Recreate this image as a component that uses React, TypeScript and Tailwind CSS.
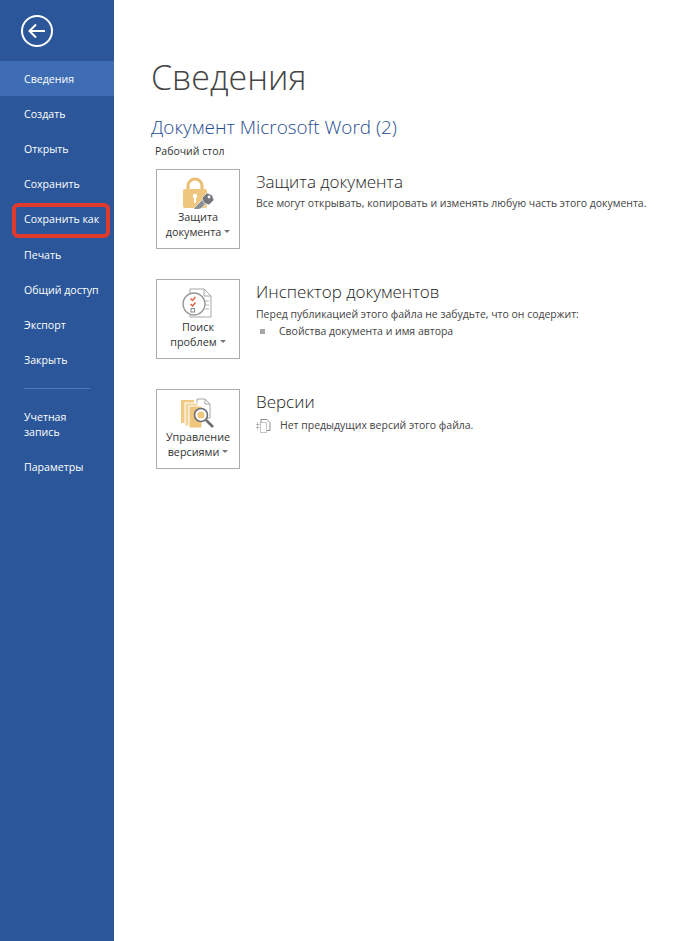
const font = "font-['Open_Sans','Noto_Sans',sans-serif]"

const menuTop = ['Создать', 'Открыть', 'Сохранить', 'Сохранить как', 'Печать', 'Общий доступ', 'Экспорт', 'Закрыть']

function MenuItem({ label, active, outlined }: { label: string; active?: boolean; outlined?: boolean }) {
  return (
    <div className={`relative h-[35.2px] flex items-center pl-6 pt-[2px] text-[10.6px] text-white ${active ? 'bg-[#3e6db4]' : ''}`}>
      {label}
      {outlined && <span className="absolute left-3 right-1 top-[1px] bottom-[-1px] rounded-[6px] border-[4px] border-[#df3a2c]" />}
    </div>
  )
}

function LockIcon() {
  return (
    <svg width="36" height="32" viewBox="0 0 36 32">
      <path d="M8 13V9a7 7 0 0 1 14 0v4" fill="none" stroke="#e9bf74" strokeWidth="3" />
      <rect x="3" y="12" width="24" height="19" rx="2" fill="#efc67e" />
      <circle cx="15" cy="19" r="2.2" fill="#fff" />
      <rect x="14" y="20" width="2" height="6" fill="#fff" />
      <path d="M14 31l9-9 2 2-1 2 2 0 0 2-2 0-1 2-3 2-6 1z" fill="#8b8f94" stroke="#fff" strokeWidth="0.6" />
      <path d="M22 21l5-5 5 2 2 5-5 5-5-2z" fill="#73777c" stroke="#fff" strokeWidth="0.6" />
      <circle cx="29" cy="20" r="1.4" fill="#fff" />
    </svg>
  )
}

function InspectIcon() {
  return (
    <svg width="36" height="32" viewBox="0 0 36 32" fill="none">
      <path d="M10 2h14l7 7v21H10z" fill="#fff" stroke="#a6a6a6" />
      <path d="M24 2v7h7" stroke="#a6a6a6" />
      <path d="M25 14h4M25 18h4M25 22h4" stroke="#b8b8b8" />
      <circle cx="14" cy="17" r="11" fill="#fff" stroke="#9a9a9a" strokeWidth="1.4" />
      <path d="M10.5 11.5l2 2 3-3.5M10.5 17l2 2 3-3.5" stroke="#e0603a" strokeWidth="1.4" />
      <rect x="11" y="21.5" width="3.5" height="3.5" stroke="#8a8a8a" />
    </svg>
  )
}

function VersionsIcon() {
  return (
    <svg width="36" height="32" viewBox="0 0 36 32" fill="none">
      <path d="M17 2h8l5 5v14H17z" fill="#fff" stroke="#a6a6a6" />
      <path d="M25 2v5h5" stroke="#a6a6a6" />
      <rect x="1" y="3" width="13" height="23" fill="#f0ca85" />
      <rect x="5" y="6" width="13" height="23" fill="#f3d498" stroke="#fff" />
      <rect x="9" y="9" width="13" height="22" fill="#efc67e" stroke="#fff" />
      <circle cx="21" cy="18" r="6.5" fill="#fff" stroke="#6a6e73" strokeWidth="1.6" />
      <circle cx="21" cy="18" r="3.5" fill="#efc67e" />
      <path d="M26 23l7 7" stroke="#6a6e73" strokeWidth="2.6" />
    </svg>
  )
}

function Section({ icon, lines, title, children, className }: {
  icon: React.ReactNode
  lines: string[]
  title: string
  children: React.ReactNode
  className?: string
}) {
  return (
    <div className={`flex ${className ?? ''}`}>
      <div className="w-[84px] h-[80px] border border-[#ababab] flex flex-col items-center pt-[7px] text-[10.8px] leading-[15px] text-[#333]">
        <div className="h-[32px] flex items-center">{icon}</div>
        <div className="text-center">{lines[0]}</div>
        <div className="flex items-center whitespace-nowrap text-center">
          {lines[1]}
          <span className="ml-[3px] border-x-[3px] border-x-transparent border-t-[3px] border-t-[#777]" />
        </div>
      </div>
      <div className="ml-[16px] flex-1">
        <h3 className="text-[17px] leading-[22px] mt-[2px] font-light text-[#222]">{title}</h3>
        {children}
      </div>
    </div>
  )
}

export default function App() {
  return (
    <div className={`${font} flex min-h-[941px] bg-white`}>
      <aside className="w-[114px] shrink-0 bg-[#2b579a]">
        <div className="h-[61px] pl-[21px] pt-[15px]">
          <svg width="32" height="32" viewBox="0 0 32 32" fill="none" stroke="#fff">
            <circle cx="16" cy="16" r="15" strokeWidth="2" />
            <path d="M24 16H9M15 9.5L8.5 16l6.5 6.5" strokeWidth="2" />
          </svg>
        </div>
        <MenuItem label="Сведения" active />
        {menuTop.map(label => (
          <MenuItem key={label} label={label} outlined={label === 'Сохранить как'} />
        ))}
        <div className="ml-6 mt-[10px] mb-[20px] w-[66px] h-px bg-[#4f78b5]" />
        <div className="pl-6 pt-[1px] text-[10.6px] leading-[15px] text-white">
          <div>Учетная</div>
          <div>запись</div>
        </div>
        <div className="pl-6 mt-[20px] text-[10.6px] leading-[15px] text-white">Параметры</div>
      </aside>
      <main className="flex-1 pl-[37px] pt-[52px]">
        <h1 className="text-[34px] leading-[50px] font-light text-[#444]">Сведения</h1>
        <h2 className="mt-[12px] text-[18.9px] leading-[26px] font-light text-[#1f4c90]">Документ Microsoft Word (2)</h2>
        <p className="mt-[4px] ml-[4px] text-[10.5px] leading-[15px] text-[#333]">Рабочий стол</p>
        <div className="ml-[5px] mt-[10px]">
          <Section icon={<LockIcon />} lines={['Защита', 'документа']} title="Защита документа">
            <p className="mt-[3px] text-[10.48px] leading-[15px] text-[#444]">Все могут открывать, копировать и изменять любую часть этого документа.</p>
          </Section>
          <Section className="mt-[30px]" icon={<InspectIcon />} lines={['Поиск', 'проблем']} title="Инспектор документов">
            <p className="mt-[4px] text-[10.48px] leading-[15px] text-[#444]">Перед публикацией этого файла не забудьте, что он содержит:</p>
            <div className="flex items-center mt-[2px] text-[10.48px] leading-[15px] text-[#444]">
              <span className="ml-[4px] mr-[14px] w-[5px] h-[5px] bg-[#a6a6a6]" />
              Свойства документа и имя автора
            </div>
          </Section>
          <Section className="mt-[30px]" icon={<VersionsIcon />} lines={['Управление', 'версиями']} title="Версии">
            <div className="flex items-center mt-[5px] text-[10.48px] leading-[15px] text-[#444]">
              <svg className="mr-[9px]" width="15" height="14" viewBox="0 0 15 14" fill="none" stroke="#8a8a8a">
                <path d="M5 3.5V.5h6l3 3v8h-3" />
                <rect x="4.5" y="3.5" width="6" height="10" strokeDasharray="1 1" />
                <path d="M1.5 3.5v8M.5 5.5h4M.5 8.5h4" strokeDasharray="1 1" />
              </svg>
              Нет предыдущих версий этого файла.
            </div>
          </Section>
        </div>
      </main>
    </div>
  )
}
